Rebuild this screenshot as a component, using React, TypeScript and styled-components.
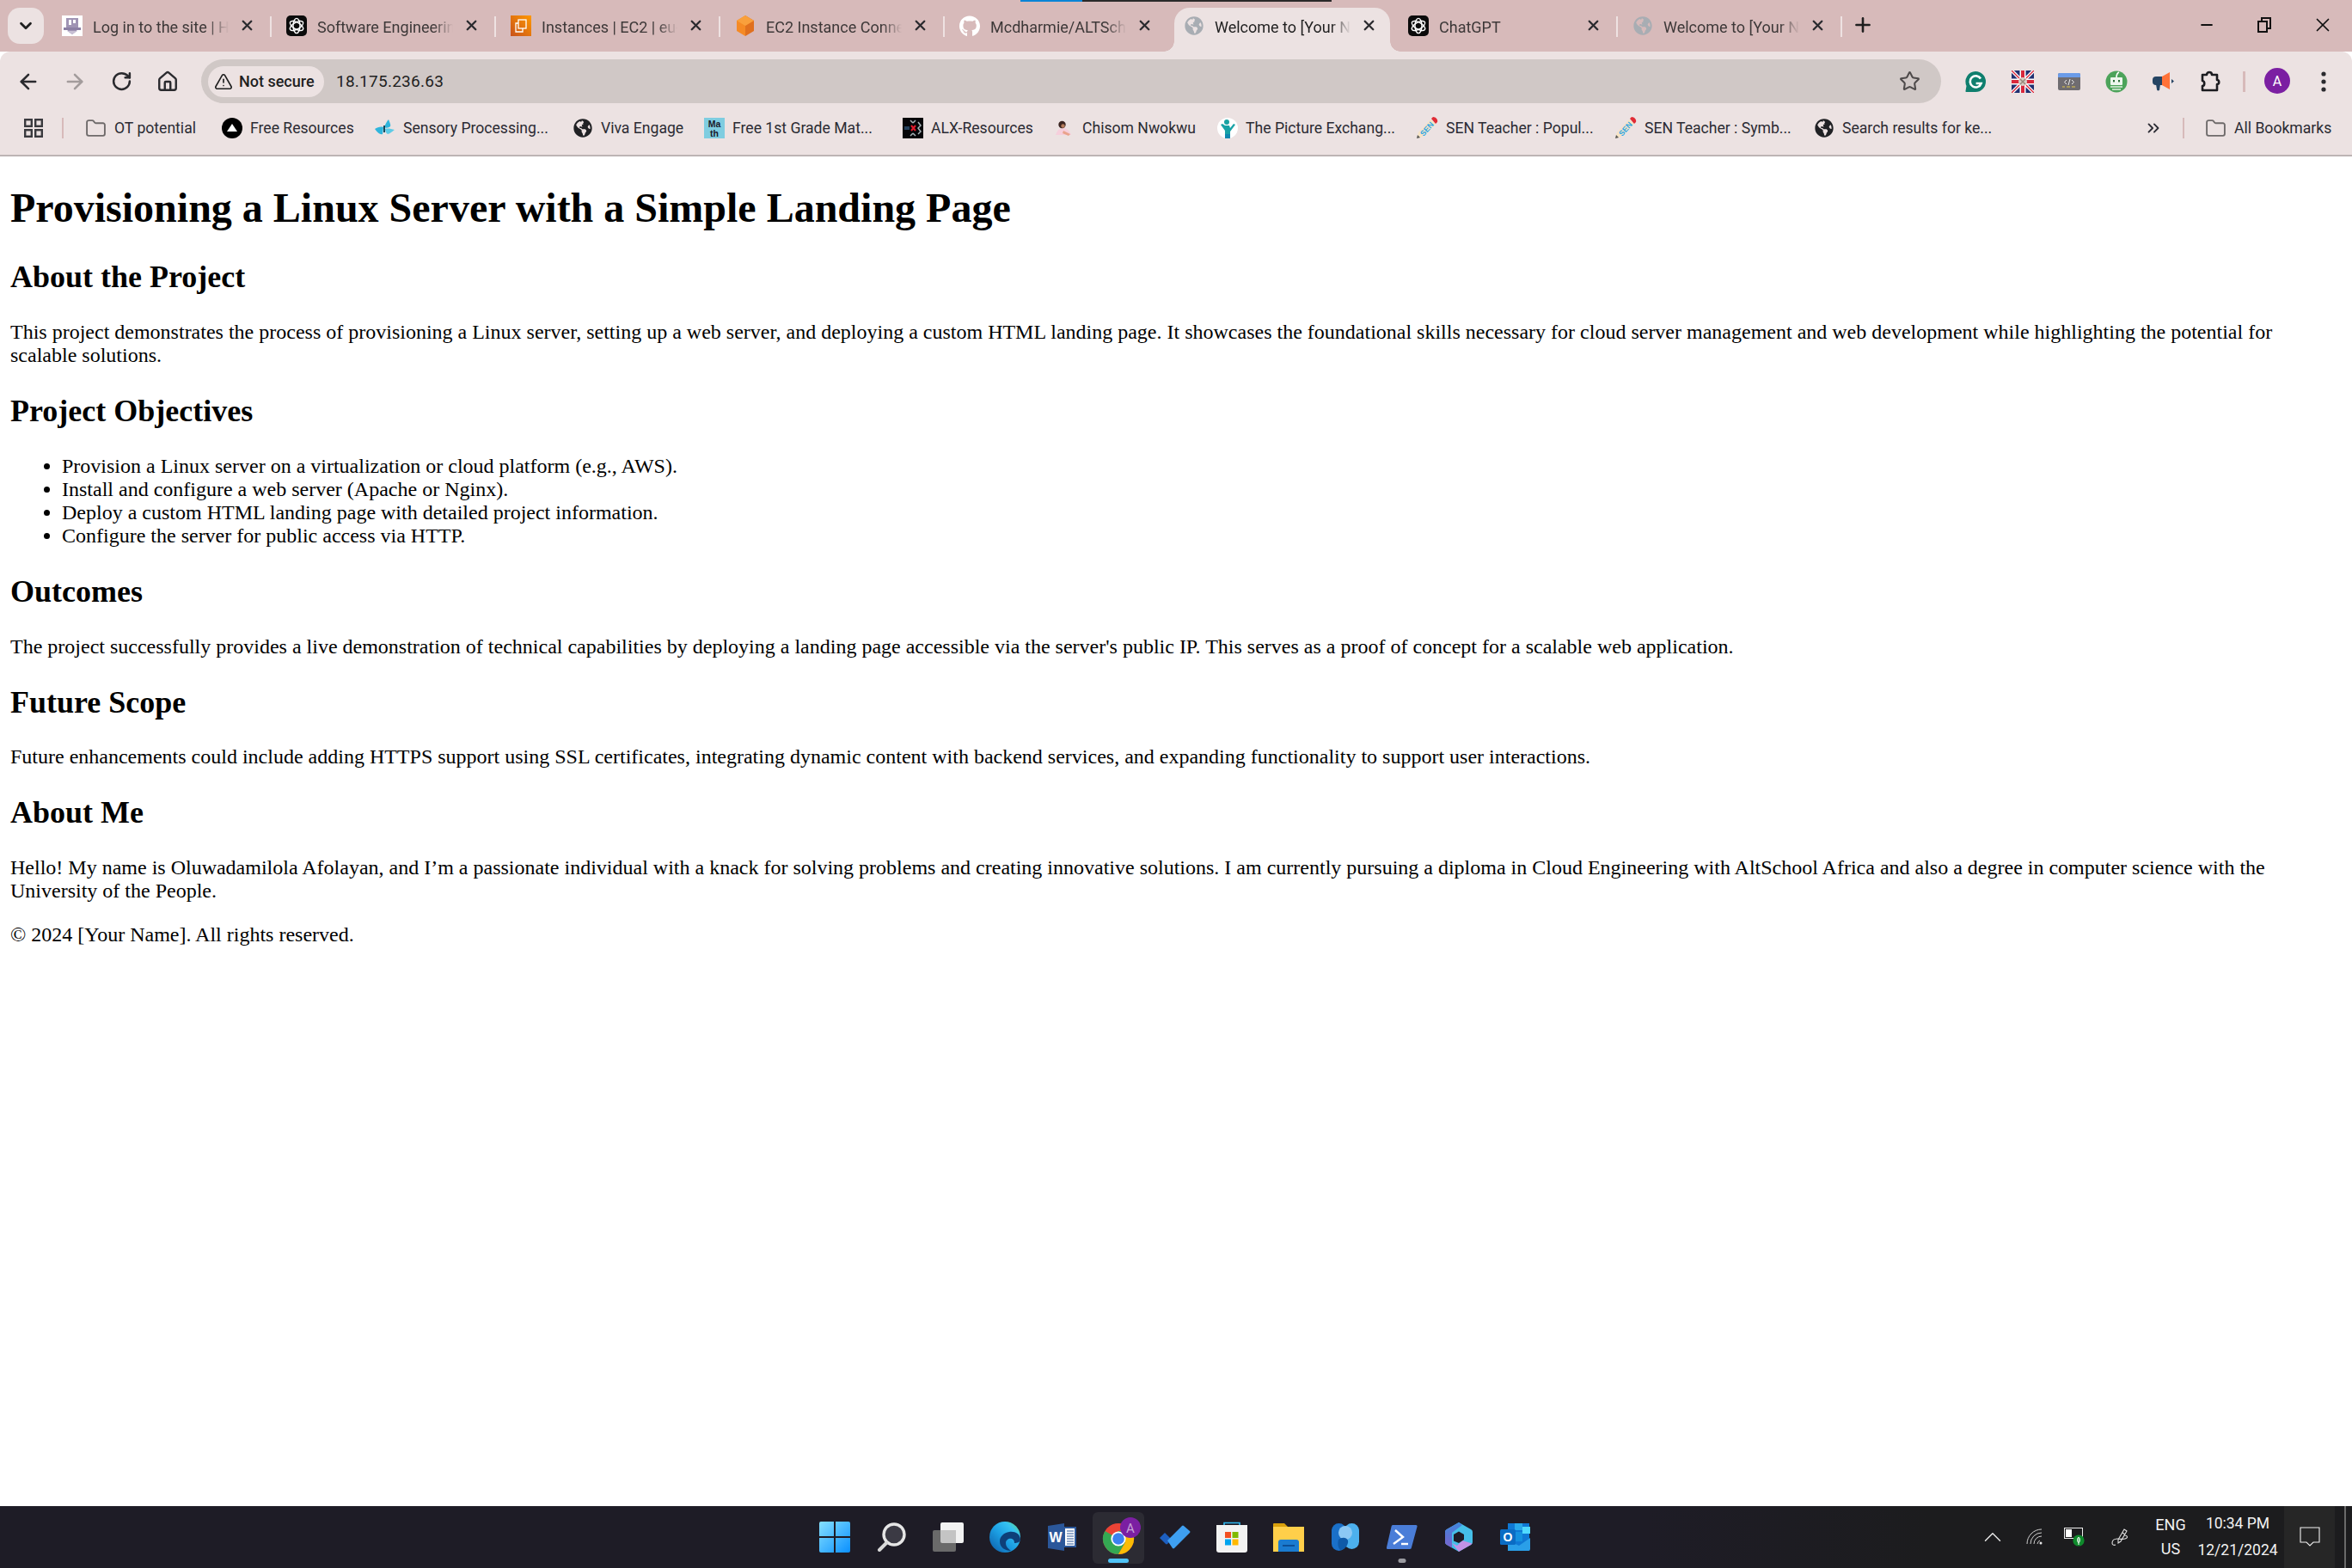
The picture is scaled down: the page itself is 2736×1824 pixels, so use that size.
import React from "react";
import styled, { createGlobalStyle } from "styled-components";
import {
  ArrowLeft,
  ArrowRight,
  RotateCw,
  House,
  Star,
  TriangleAlert,
  Folder,
  ChevronDown,
  ChevronsRight,
  ChevronUp,
  X,
  Plus,
  Minus,
} from "lucide-react";
import { FaGlobeAmericas, FaGithub } from "react-icons/fa";

const UI = `Roboto, "Noto Sans", sans-serif`;

const Global = createGlobalStyle`
  html, body { margin: 0; padding: 0; background: #fff; overflow: hidden; }
  #root { height: 1824px; }
`;

const Screen = styled.div`
  position: relative;
  display: flex;
  flex-direction: column;
  height: 1824px;
  width: 2736px;
  overflow: hidden;
`;

/* ---------- tab strip ---------- */
const TabStrip = styled.div`
  position: relative;
  display: flex;
  align-items: flex-end;
  height: 60px;
  flex: none;
  background: #d7baba;
  padding-left: 9px;
  font-family: ${UI};
`;
const LoadBar = styled.div`
  position: absolute;
  top: 0;
  left: 1187px;
  width: 362px;
  height: 2px;
  background: linear-gradient(90deg, #0a84d6 0 72px, #2a2a2a 72px);
`;
const TabSearch = styled.div`
  flex: none;
  align-self: flex-start;
  margin-top: 9px;
  margin-right: 4px;
  width: 42px;
  height: 42px;
  border-radius: 14px;
  background: #ece2e2;
  display: flex;
  align-items: center;
  justify-content: center;
  color: #1f1f1f;
`;
const Tab = styled.div<{ $active?: boolean; $sep?: boolean }>`
  position: relative;
  flex: none;
  width: 261px;
  height: 51px;
  box-sizing: border-box;
  padding-left: 17px;
  display: flex;
  align-items: center;
  color: ${(p) => (p.$active ? "#1f1f1f" : "#3d3838")};
  font-size: 18px;
  &::after {
    content: "";
    display: ${(p) => (p.$sep ? "block" : "none")};
    position: absolute;
    right: 0;
    top: 10px;
    width: 2px;
    height: 24px;
    background: #eee2e2;
  }
`;
const ActiveShape = styled.div`
  position: absolute;
  left: 6px;
  right: 4px;
  top: 0;
  bottom: 0;
  background: #ece2e2;
  border-radius: 18px 18px 0 0;
  &::before,
  &::after {
    content: "";
    position: absolute;
    bottom: 0;
    width: 12px;
    height: 12px;
  }
  &::before {
    left: -12px;
    background: radial-gradient(circle at 0 0, #d7baba 11.5px, #ece2e2 12px);
  }
  &::after {
    right: -12px;
    background: radial-gradient(circle at 100% 0, #d7baba 11.5px, #ece2e2 12px);
  }
`;
const TabIcon = styled.span<{ $dim?: boolean }>`
  position: relative;
  flex: none;
  width: 24px;
  height: 24px;
  margin-top: -9px;
  display: flex;
  align-items: center;
  justify-content: center;
  color: ${(p) => (p.$dim ? "#a8adb3" : "#202124")};
  svg { display: block; }
`;
const TabTitle = styled.span`
  position: relative;
  flex: none;
  width: 158px;
  margin-left: 12px;
  margin-top: -6px;
  overflow: hidden;
  white-space: nowrap;
  line-height: 24px;
  -webkit-mask-image: linear-gradient(90deg, #000 135px, transparent 158px);
  mask-image: linear-gradient(90deg, #000 135px, transparent 158px);
`;
const TabClose = styled.span`
  position: relative;
  flex: none;
  width: 20px;
  height: 20px;
  margin-left: 11px;
  margin-top: -10px;
  display: flex;
  align-items: center;
  justify-content: center;
  color: #2b2b2f;
`;
const NewTab = styled.div`
  align-self: flex-start;
  margin-top: 15px;
  margin-left: 10px;
  width: 28px;
  height: 28px;
  display: flex;
  align-items: center;
  justify-content: center;
  color: #1f1f1f;
`;
const WindowControls = styled.div`
  margin-left: auto;
  align-self: flex-start;
  display: flex;
  margin-right: 0;
  color: #111;
  height: 58px;
`;
const WinButton = styled.div<{ $w: number }>`
  width: ${(p) => p.$w}px;
  height: 58px;
  display: flex;
  align-items: center;
  justify-content: center;
`;

/* ---------- toolbar ---------- */
const Toolbar = styled.div`
  flex: none;
  height: 60px;
  background: #ece2e2;
  border-radius: 12px 12px 0 0;
  box-sizing: border-box;
  padding: 9px 0 0 6px;
  display: flex;
  align-items: flex-start;
  font-family: ${UI};
`;
const NavButton = styled.div<{ $off?: boolean }>`
  flex: none;
  width: 54px;
  height: 51px;
  display: flex;
  align-items: center;
  justify-content: center;
  color: ${(p) => (p.$off ? "#a39c9c" : "#2a2a2e")};
`;
const Omnibox = styled.div`
  flex: none;
  width: 2024px;
  height: 51px;
  box-sizing: border-box;
  margin-left: 12px;
  margin-right: 13px;
  border-radius: 26px;
  background: #d0c8c6;
  padding: 0 24px 0 8px;
  display: flex;
  align-items: center;
`;
const Chip = styled.div`
  flex: none;
  height: 36px;
  width: 135px;
  box-sizing: border-box;
  border-radius: 18px;
  background: #ece2e2;
  padding-left: 7px;
  display: flex;
  align-items: center;
  gap: 7px;
  color: #1f1f1f;
  font-size: 18px;
  font-weight: 500;
  white-space: nowrap;
`;
const Url = styled.span`
  margin-left: 14px;
  font-size: 19px;
  letter-spacing: 0.25px;
  color: #1f1f1f;
`;
const StarWrap = styled.span`
  margin-left: auto;
  display: flex;
  color: #4f4b4b;
`;
const ToolSlot = styled.div`
  flex: none;
  width: 54.5px;
  height: 51px;
  display: flex;
  align-items: center;
  justify-content: center;
`;
const ToolSep = styled.div`
  flex: none;
  width: 3px;
  height: 24px;
  margin: 14px 22px 0 11px;
  background: #d7baba;
`;
const Avatar = styled.div`
  flex: none;
  width: 30px;
  height: 30px;
  margin-top: 10px;
  border-radius: 50%;
  background: #7b1fa2;
  color: #fff;
  display: flex;
  align-items: center;
  justify-content: center;
  font-size: 16px;
`;
const Dots = styled.div`
  flex: none;
  width: 54px;
  height: 51px;
  margin-left: 12px;
  display: flex;
  align-items: center;
  justify-content: center;
  color: #2a2a2e;
`;

/* ---------- bookmarks ---------- */
const BookmarkBar = styled.div`
  flex: none;
  height: 62px;
  box-sizing: border-box;
  background: #ece2e2;
  border-bottom: 2px solid #bdb4b4;
  display: flex;
  align-items: center;
  padding: 0 0 2px 28px;
  font-family: ${UI};
  font-size: 17.6px;
  color: #2b2b33;
`;
const BarSep = styled.div<{ $ml: number; $mr: number }>`
  flex: none;
  width: 2px;
  height: 24px;
  margin-left: ${(p) => p.$ml}px;
  margin-right: ${(p) => p.$mr}px;
  background: #d7baba;
`;
const Bookmark = styled.div<{ $w: number }>`
  flex: none;
  width: ${(p) => p.$w}px;
  display: flex;
  align-items: center;
  gap: 9px;
  white-space: nowrap;
  overflow: hidden;
  color: #2b2b33;
`;
const BookmarkGlobe = styled.span`
  flex: none;
  width: 24px;
  height: 24px;
  display: flex;
  align-items: center;
  justify-content: center;
  color: #202124;
`;
const Overflow = styled.div`
  margin-left: auto;
  display: flex;
  color: #2b2b33;
`;

/* ---------- page ---------- */
const Page = styled.main`
  flex: 1;
  min-height: 0;
  overflow: hidden;
  background: #fff;
  color: #000;
  padding: 0 12px;
  font-family: "Liberation Serif", "Times New Roman", serif;
  font-size: 24px;
  line-height: 27px;
`;
const H1 = styled.h1`
  font-size: 48px;
  line-height: 55px;
  margin: 32.16px 0;
  font-weight: 700;
`;
const H2 = styled.h2`
  font-size: 36px;
  line-height: 42px;
  margin: 29.88px 0;
  font-weight: 700;
`;
const Para = styled.p`
  margin: 24px 0;
`;
const List = styled.ul`
  margin: 24px 0;
  padding-left: 60px;
`;

/* ---------- taskbar ---------- */
const Taskbar = styled.footer`
  flex: none;
  height: 72px;
  display: flex;
  align-items: stretch;
  background: linear-gradient(90deg, #1e1c26 0 70%, #1c1c1e 82%);
  font-family: ${UI};
  color: #f2f2f2;
`;
const TaskSpacer = styled.div`
  flex: 0 0 938px;
`;
const TaskGroup = styled.div`
  display: flex;
  align-items: stretch;
`;
const TaskSlot = styled.div<{ $active?: boolean }>`
  position: relative;
  width: 66px;
  display: flex;
  align-items: center;
  justify-content: center;
  &::before {
    content: "";
    display: ${(p) => (p.$active ? "block" : "none")};
    position: absolute;
    left: 3px;
    right: 3px;
    top: 7px;
    bottom: 5px;
    border-radius: 6px;
    background: #2c2b33;
  }
  svg { position: relative; }
`;
const Pip = styled.span<{ $wide?: boolean }>`
  position: absolute;
  bottom: 6px;
  left: 50%;
  transform: translateX(-50%);
  width: ${(p) => (p.$wide ? 24 : 9)}px;
  height: 5px;
  border-radius: 3px;
  background: ${(p) => (p.$wide ? "#4fc3f7" : "#9a9aa0")};
`;
const Tray = styled.div`
  margin-left: auto;
  display: flex;
  align-items: center;
  height: 100%;
`;
const TrayIcon = styled.div<{ $w: number }>`
  flex: none;
  width: ${(p) => p.$w}px;
  display: flex;
  align-items: center;
  justify-content: center;
`;
const Lang = styled.div`
  flex: none;
  width: 56px;
  text-align: center;
  font-size: 18px;
  line-height: 28px;
`;
const Clock = styled.div`
  flex: none;
  width: 100px;
  margin-right: 4px;
  text-align: center;
  font-size: 17.5px;
  line-height: 31px;
`;
const Notify = styled.div`
  flex: none;
  width: 59px;
  height: 100%;
  background: #262626;
  display: flex;
  align-items: center;
  justify-content: center;
`;
const EdgeLine = styled.div`
  flex: none;
  width: 20px;
  height: 100%;
  display: flex;
  justify-content: center;
  &::after {
    content: "";
    width: 2px;
    margin-left: 4px;
    background: #6a6a6a;
  }
`;

/* ---------- drawings ---------- */
const OpenAIIcon = () => (
  <svg width="24" height="24" viewBox="0 0 24 24">
    <rect width="24" height="24" rx="5" fill="#0b0b0b" />
    <g fill="none" stroke="#fff" strokeWidth="1.4">
      <ellipse cx="12" cy="12" rx="4" ry="8.6" />
      <ellipse cx="12" cy="12" rx="4" ry="8.6" transform="rotate(60 12 12)" />
      <ellipse cx="12" cy="12" rx="4" ry="8.6" transform="rotate(120 12 12)" />
    </g>
  </svg>
);
const CrestIcon = () => (
  <svg width="24" height="24" viewBox="0 0 24 24">
    <rect width="24" height="24" fill="#fff" />
    <path d="M5 3h14v10c0 4-3 6-7 9-4-3-7-5-7-9z" fill="#a094b4" />
    <path d="M8 5h3v6H8zM13 5h3v4h-3z" fill="#fff" />
    <path d="M2 14h20v3H2z" fill="#8c80a4" />
    <path d="M6 18h12l-6 4z" fill="#c8c0d4" />
  </svg>
);
const Ec2Icon = () => (
  <svg width="24" height="24" viewBox="0 0 24 24">
    <defs>
      <linearGradient id="ec2g" x1="0" y1="1" x2="1" y2="0">
        <stop offset="0" stopColor="#c8511b" />
        <stop offset="1" stopColor="#ff9900" />
      </linearGradient>
    </defs>
    <rect width="24" height="24" fill="url(#ec2g)" />
    <g fill="none" stroke="#fff" strokeWidth="1.3">
      <rect x="9" y="5" width="9" height="10" />
      <path d="M9 9H6v10h8v-4" />
    </g>
  </svg>
);
const CubeIcon = () => (
  <svg width="24" height="24" viewBox="0 0 24 24">
    <path d="M12 0 22 6v12l-10 6z" fill="#e0701e" />
    <path d="M12 0 2 6v12l10 6z" fill="#f58a25" />
    <path d="M12 0 22 6 12 12 2 6z" fill="#f9a03c" />
  </svg>
);
const GithubIcon = () => <FaGithub size={25} color="#ffffff" />;
const Globe = () => <FaGlobeAmericas size={22} />;

const TriIcon = () => (
  <svg width="24" height="24" viewBox="0 0 24 24">
    <circle cx="12" cy="12" r="12" fill="#000" />
    <path d="M12 7 18 16H6z" fill="#fff" />
  </svg>
);
const ButterflyIcon = () => (
  <svg width="25" height="24" viewBox="0 0 25 24">
    <path d="M1 13c3-2 7-3 10-2l-1 8c-3 1-6-2-9-6z" fill="#2fb5dc" />
    <path d="M12 11c1-3 3-7 5-9 1 3 3 6 2 8-2 2-5 2-7 1z" fill="#2fb5dc" />
    <path d="M13 13c3-1 7 0 11 1-3 2-6 5-8 5-2-1-3-4-3-6z" fill="#5dcbe6" />
    <path d="M11 9h2v8h-2z" fill="#18485a" />
  </svg>
);
const MathIcon = () => (
  <svg width="24" height="24" viewBox="0 0 24 24">
    <rect width="24" height="24" fill="#7fcde0" />
    <text x="12" y="10.5" textAnchor="middle" fontSize="10.5" fontWeight="700" fontFamily="Liberation Sans, sans-serif" fill="#1a1a2a">Ma</text>
    <text x="12" y="21.5" textAnchor="middle" fontSize="10.5" fontWeight="700" fontFamily="Liberation Sans, sans-serif" fill="#1a1a2a">th</text>
  </svg>
);
const AlxIcon = () => (
  <svg width="24" height="24" viewBox="0 0 24 24">
    <rect width="24" height="24" fill="#060609" />
    <path d="M2 10h6v4H2z" fill="#24405c" />
    <path d="M10 9l5 6M15 9l-5 6" stroke="#e01b2c" strokeWidth="2" />
    <path d="M9 3l3 3M15 3l-3 3M18 5l3 4-3 3 3 4-3 3M9 21l3-3M15 21l-3-3" stroke="#a8b4b8" strokeWidth="1.5" fill="none" />
  </svg>
);
const ChisomIcon = () => (
  <svg width="24" height="24" viewBox="0 0 24 24">
    <path d="M2 20c2-6 5-8 9-8s7 3 9 8z" fill="#f6cfdc" />
    <circle cx="9.5" cy="8" r="4.2" fill="#3a2420" />
    <circle cx="10.5" cy="9.5" r="2.2" fill="#b57a5a" />
    <path d="M11 15l8 4-2 2-7-3z" fill="#e9a38c" />
  </svg>
);
const PecsIcon = () => (
  <svg width="24" height="24" viewBox="0 0 24 24">
    <circle cx="12" cy="12" r="12" fill="#fff" />
    <circle cx="11" cy="5" r="3" fill="#19a3a3" />
    <path d="M9 9h5l1 3 4-5 2 1-6 8v7H9v-8L4 8l2-1z" fill="#17a2a6" />
    <rect x="9" y="19" width="6" height="5" fill="#0f88b0" />
  </svg>
);
const PencilIcon = () => (
  <svg width="26" height="26" viewBox="0 0 26 26">
    <path d="M1 25 3 18 17 3l6 5L8 23z" fill="#f6e4c4" />
    <path d="M1 25 2 21l3 3z" fill="#555" />
    <path d="M18 2l2-2c3 0 6 3 5 6l-2 2z" fill="#e02b35" />
    <text x="13" y="17" textAnchor="middle" fontSize="9" fontWeight="700" fontFamily="Liberation Sans, sans-serif" fill="#2fa6e6" transform="rotate(-48 13 14)">SEN</text>
  </svg>
);

const GrammarlyIcon = () => (
  <svg width="26" height="26" viewBox="0 0 26 26">
    <path d="M13 1a12 12 0 1 1 0 24H2.5c-.8 0-1.2-.6-1-1.3L2.5 18A12 12 0 0 1 13 1z" fill="#0f7f6e" />
    <path d="M19 9.5a6.6 6.6 0 1 0 .6 5.5h-6" fill="none" stroke="#fff" strokeWidth="2.6" />
  </svg>
);
const FlagIcon = () => (
  <svg width="26" height="26" viewBox="0 0 26 26">
    <rect width="26" height="26" fill="#1f2f70" />
    <path d="M0 0 26 26M26 0 0 26" stroke="#fff" strokeWidth="4" />
    <path d="M0 0 26 26M26 0 0 26" stroke="#d8283c" strokeWidth="1.4" />
    <path d="M13 0v26M0 13h26" stroke="#fff" strokeWidth="7" />
    <path d="M13 0v26M0 13h26" stroke="#d8283c" strokeWidth="4" />
    <circle cx="13" cy="13" r="5" fill="#d9cfc6" />
    <path d="M10 10l6 6M16 10l-6 6" stroke="#9b8a7c" strokeWidth="1.6" />
  </svg>
);
const DevIcon = () => (
  <svg width="26" height="20" viewBox="0 0 26 20">
    <rect width="26" height="20" rx="2" fill="#6f6c70" />
    <path d="M0 2a2 2 0 0 1 2-2h22a2 2 0 0 1 2 2v3H0z" fill="#6a9be8" />
    <path d="M10 8l-2.5 2.5L10 13M16 8l2.5 2.5L16 13M14 7l-2 7" stroke="#eee" strokeWidth="1" fill="none" />
    <path d="M5 16h3M10 16h4M16 16h4" stroke="#e4c84a" strokeWidth="1.2" />
  </svg>
);
const RobotIcon = () => (
  <svg width="26" height="26" viewBox="0 0 26 26">
    <circle cx="13" cy="13" r="12.5" fill="#4ca35a" />
    <path d="M13 8c0-3 1-5 3-6" stroke="#fff" strokeWidth="1.6" fill="none" />
    <rect x="6" y="8" width="14" height="9" rx="1" fill="#eef6ee" />
    <rect x="9" y="11" width="2" height="2.4" fill="#2e6e3a" />
    <rect x="15" y="11" width="2" height="2.4" fill="#2e6e3a" />
    <path d="M6 19h14M8 22h10" stroke="#dff0df" strokeWidth="1.5" />
  </svg>
);
const MegaphoneIcon = () => (
  <svg width="26" height="26" viewBox="0 0 26 26">
    <path d="M1 11a4 4 0 0 1 4-4h8v10H5a4 4 0 0 1-4-4z" fill="#254463" />
    <path d="M5 16h5l-1 7c-2 1-3 0-3-1z" fill="#254463" />
    <path d="M12 7l9-5v20l-9-5z" fill="#ff7238" />
    <path d="M23 10l3 2.5-3 2.5z" fill="#254463" />
  </svg>
);
const PuzzleIcon = () => (
  <svg width="28" height="28" viewBox="0 0 28 28" fill="none" stroke="#1c1c20" strokeWidth="2.6" strokeLinejoin="round">
    <path d="M5 6h5c0-4 6-4 6 0h6v6c3 0 3 5 0 5v7H5v-5c3 0 3-6 0-6z" />
  </svg>
);
const RestoreIcon = () => (
  <svg width="16" height="18" viewBox="0 0 16 18" fill="none" stroke="#111" strokeWidth="2">
    <rect x="1" y="5" width="10" height="12" />
    <path d="M5 4V1h10v12h-3" />
  </svg>
);

const StartIcon = () => (
  <svg width="36" height="36" viewBox="0 0 36 36">
    <defs>
      <linearGradient id="stg" x1="0" y1="0" x2="1" y2="1">
        <stop offset="0" stopColor="#86e0ff" />
        <stop offset="1" stopColor="#0a90ff" />
      </linearGradient>
    </defs>
    <path d="M2 0h15v17H0V2a2 2 0 0 1 2-2zM19 0h15a2 2 0 0 1 2 2v15H19zM0 19h17v17H2a2 2 0 0 1-2-2zM19 19h17v15a2 2 0 0 1-2 2H19z" fill="url(#stg)" />
  </svg>
);
const SearchIcon = () => (
  <svg width="34" height="34" viewBox="0 0 34 34">
    <circle cx="20" cy="14" r="12" fill="#3b3a44" stroke="#e6e6e6" strokeWidth="3.4" />
    <path d="M11 24 3 32" stroke="#d8d8d8" strokeWidth="4" strokeLinecap="round" />
  </svg>
);
const TaskViewIcon = () => (
  <svg width="36" height="34" viewBox="0 0 36 34">
    <rect x="9" y="0" width="27" height="24" rx="2" fill="#f2f2f2" />
    <rect x="0" y="9" width="27" height="25" rx="2" fill="#6a6a6a" />
    <path d="M9 9h18v15H11a2 2 0 0 1-2-2z" fill="#c4c4c4" />
  </svg>
);
const EdgeIcon = () => (
  <svg width="36" height="36" viewBox="0 0 36 36">
    <defs>
      <linearGradient id="edg" x1="0" y1="1" x2="1" y2="0">
        <stop offset="0" stopColor="#0c59a4" />
        <stop offset=".45" stopColor="#1b9de2" />
        <stop offset=".75" stopColor="#35c1f1" />
        <stop offset="1" stopColor="#6ade6c" />
      </linearGradient>
    </defs>
    <circle cx="18" cy="18" r="18" fill="url(#edg)" />
    <path d="M36 21c0-7-7-10-13-9-6 1-11 5-11 11 0 7 6 11 13 11-2-2-6-4-6-9 0-4 4-6 7-5 3 1 3 4 3 5 3 0 7-1 7-4z" fill="#0e3f78" />
  </svg>
);
const WordIcon = () => (
  <svg width="33" height="32" viewBox="0 0 33 32">
    <path d="M19 0 0 3v26l19 3z" fill="#2b579a" />
    <rect x="18" y="4" width="15" height="24" fill="#2b579a" />
    <rect x="20" y="6" width="11" height="20" fill="#fff" />
    <path d="M22 9h8M22 12h8M22 15h8M22 18h8M22 21h8M22 24h8" stroke="#2b579a" strokeWidth="1.2" />
    <text x="9" y="22" textAnchor="middle" fontSize="16" fontWeight="700" fontFamily="Liberation Sans, sans-serif" fill="#fff">W</text>
  </svg>
);
const ChromeIcon = () => (
  <svg width="56" height="46" viewBox="-10 0 56 46">
    <circle cx="18" cy="25" r="18" fill="#ea4335" />
    <path d="M18 25 2.4 34A18 18 0 0 1 2.4 16z" fill="#34a853" />
    <path d="M2.4 34A18 18 0 0 0 18 43L33.6 16H18z" fill="#34a853" />
    <path d="M33.6 16A18 18 0 0 1 18 43l7.8-13.5-2-6z" fill="#fbbc04" />
    <circle cx="18" cy="25" r="8.6" fill="#fff" />
    <circle cx="18" cy="25" r="6.8" fill="#3b82f0" />
    <circle cx="32" cy="12" r="12" fill="#7b1fa2" />
    <text x="32" y="17.5" textAnchor="middle" fontSize="15" fontFamily="Roboto, sans-serif" fill="#c7a3d8">A</text>
  </svg>
);
const TodoIcon = () => (
  <svg width="36" height="28" viewBox="0 0 36 28">
    <path d="M0 15l6-6 8 8-5 5a1.5 1.5 0 0 1-2 0z" fill="#1d5fc0" />
    <path d="M9 18 26 1a1.5 1.5 0 0 1 2 0l7 6a1.5 1.5 0 0 1 0 2L17 27a1.5 1.5 0 0 1-2 0z" fill="#3e9ff0" />
  </svg>
);
const StoreIcon = () => (
  <svg width="36" height="36" viewBox="0 0 36 36">
    <path d="M9 5V1.5h18V5" fill="none" stroke="#2fb8f0" strokeWidth="1.6" />
    <path d="M0 4h36v29a3 3 0 0 1-3 3H3a3 3 0 0 1-3-3z" fill="#f3f3f3" />
    <rect x="10" y="12" width="7" height="7" fill="#f25022" />
    <rect x="18.5" y="12" width="7" height="7" fill="#7fba00" />
    <rect x="10" y="20.5" width="7" height="7" fill="#00a4ef" />
    <rect x="18.5" y="20.5" width="7" height="7" fill="#ffb900" />
  </svg>
);
const FolderIcon = () => (
  <svg width="36" height="33" viewBox="0 0 36 33">
    <path d="M0 1a1 1 0 0 1 1-1h12l4 4h19v6H0z" fill="#d9a00c" />
    <path d="M0 4h36v29H0z" fill="#ffcf4a" />
    <path d="M6 33v-11a3 3 0 0 1 3-3h18a3 3 0 0 1 3 3v11z" fill="#1a7bd0" />
    <path d="M11 26h14" stroke="#0c4f96" strokeWidth="2" />
  </svg>
);
const BlobIcon = () => (
  <svg width="32" height="32" viewBox="0 0 32 32">
    <rect x="0" y="0" width="17" height="32" rx="8.5" fill="#1a70c8" />
    <rect x="15" y="0" width="17" height="30" rx="8.5" fill="#4cb0ee" />
    <circle cx="16" cy="11" r="8" fill="#8cc8f4" />
    <path d="M8 19c4-3 9-3 11 1 1 5-4 11-9 11-3-3-3-8-2-12z" fill="#0f5aa8" />
  </svg>
);
const PowerShellIcon = () => (
  <svg width="36" height="28" viewBox="0 0 36 28">
    <path d="M7 0h27a1.5 1.5 0 0 1 1.5 2L29 26a2 2 0 0 1-2 2H1.5A1.5 1.5 0 0 1 0 26L5.5 2A2 2 0 0 1 7 0z" fill="#4a7dd8" />
    <path d="M10 6l9 8-11 8" fill="none" stroke="#fff" strokeWidth="2.4" />
    <path d="M17 22h8" stroke="#fff" strokeWidth="2.4" />
  </svg>
);
const CopilotIcon = () => (
  <svg width="32" height="34" viewBox="0 0 32 34">
    <defs>
      <linearGradient id="cpl" x1="0" y1="0" x2="0" y2="1">
        <stop offset="0" stopColor="#3f86dc" />
        <stop offset="1" stopColor="#7a62cc" />
      </linearGradient>
    </defs>
    <path d="M16 0 30 8q2 1 2 3v12q0 2-2 3L16 34 2 26q-2-1-2-3V11q0-2 2-3z" fill="#45bfe8" />
    <path d="M16 0 2 8q-2 1-2 3v12q0 2 2 3l6 3.5V12l12-9z" fill="url(#cpl)" />
    <path d="M8 24 16 34l14-8q1-.6 1.5-1.5L20 21l-6 6z" fill="#c292e6" />
    <path d="M10 14l6-3.5 6 3.5v6l-6 4-6-2.5z" fill="#1e1c26" />
  </svg>
);
const OutlookIcon = () => (
  <svg width="36" height="32" viewBox="0 0 36 32">
    <path d="M9 0h25v32H9z" fill="#0f78d4" />
    <path d="M17 0h9v8h-9z" fill="#28a8ea" />
    <path d="M26 4h9v8h-9z" fill="#50d9ff" />
    <path d="M9 10h17v11H9z" fill="#1490df" />
    <path d="M9 32V20l13 6 13-9v13a2 2 0 0 1-2 2z" fill="#2a9fe8" />
    <rect x="0" y="7" width="18" height="18" rx="1.5" fill="#0a6cc4" />
    <text x="9" y="21" textAnchor="middle" fontSize="14" fontWeight="700" fontFamily="Liberation Sans, sans-serif" fill="#fff">O</text>
  </svg>
);
const WifiIcon = () => (
  <svg width="20" height="20" viewBox="0 0 20 20" fill="none" stroke="#cfcfcf" strokeWidth="1">
    <path d="M1 18A17 17 0 0 1 18 1M5 18A13 13 0 0 1 18 5M9 18A9 9 0 0 1 18 9M13 18a5 5 0 0 1 3-4" />
    <circle cx="17" cy="17" r="1.5" fill="#e8e8e8" stroke="none" />
  </svg>
);
const BatteryIcon = () => (
  <svg width="26" height="22" viewBox="0 0 26 22">
    <rect x=".5" y=".5" width="21" height="12" fill="none" stroke="#eee" />
    <rect x="2" y="2" width="7" height="9" fill="#fff" />
    <circle cx="17" cy="15" r="6.6" fill="#0f8a2c" />
    <path d="M17 11c2 1.6 2 5 0 6.6-2-1.6-2-5 0-6.6zM17 12v8" fill="none" stroke="#fff" strokeWidth="1" />
  </svg>
);
const PenIcon = () => (
  <svg width="22" height="22" viewBox="0 0 22 22" fill="none" stroke="#e0e0e0" strokeWidth="1.1">
    <path d="M8 14 15 2l3 2-7 12-3 2zM13 6l3 2" />
    <path d="M15 9c4 0 5 3 1 4-3 1-7 0-9 0-4 0-6 2-6 5 0 2 2 3 4 2" />
  </svg>
);
const ChatIcon = () => (
  <svg width="26" height="26" viewBox="0 0 26 26" fill="none" stroke="#f2f2f2" strokeWidth="1.1">
    <path d="M2 2h22v17h-7l-4 4-4-4H2z" />
  </svg>
);

type TabData = { icon: React.ReactNode; title: string; active?: boolean; sep?: boolean; dim?: boolean };
const tabs: TabData[] = [
  { icon: <CrestIcon />, title: "Log in to the site | Hi", sep: true },
  { icon: <OpenAIIcon />, title: "Software Engineering", sep: true },
  { icon: <Ec2Icon />, title: "Instances | EC2 | eu-west", sep: true },
  { icon: <CubeIcon />, title: "EC2 Instance Connect", sep: true },
  { icon: <GithubIcon />, title: "Mcdharmie/ALTSchool" },
  { icon: <Globe />, title: "Welcome to [Your Name]", active: true, dim: true },
  { icon: <OpenAIIcon />, title: "ChatGPT", sep: true },
  { icon: <Globe />, title: "Welcome to [Your Name]", sep: true, dim: true },
];

const bookmarks: { icon: React.ReactNode; label: string; w: number }[] = [
  { icon: <Folder size={25} color="#6e6a6a" strokeWidth={1.8} />, label: "OT potential", w: 159 },
  { icon: <TriIcon />, label: "Free Resources", w: 177 },
  { icon: <ButterflyIcon />, label: "Sensory Processing...", w: 231 },
  { icon: <BookmarkGlobe><FaGlobeAmericas size={22} /></BookmarkGlobe>, label: "Viva Engage", w: 153 },
  { icon: <MathIcon />, label: "Free 1st Grade Mat...", w: 231 },
  { icon: <AlxIcon />, label: "ALX-Resources", w: 176 },
  { icon: <ChisomIcon />, label: "Chisom Nwokwu", w: 190 },
  { icon: <PecsIcon />, label: "The Picture Exchang...", w: 231 },
  { icon: <PencilIcon />, label: "SEN Teacher : Popul...", w: 231 },
  { icon: <PencilIcon />, label: "SEN Teacher : Symb...", w: 232 },
  { icon: <BookmarkGlobe><FaGlobeAmericas size={22} /></BookmarkGlobe>, label: "Search results for ke...", w: 231 },
];

const taskIcons: { node: React.ReactNode; active?: boolean; running?: boolean }[] = [
  { node: <StartIcon /> },
  { node: <SearchIcon /> },
  { node: <TaskViewIcon /> },
  { node: <EdgeIcon /> },
  { node: <WordIcon /> },
  { node: <ChromeIcon />, active: true },
  { node: <TodoIcon /> },
  { node: <StoreIcon /> },
  { node: <FolderIcon /> },
  { node: <BlobIcon /> },
  { node: <PowerShellIcon />, running: true },
  { node: <CopilotIcon /> },
  { node: <OutlookIcon /> },
];

export default function App() {
  return (
    <Screen>
      <Global />
      <TabStrip>
        <LoadBar />
        <TabSearch>
          <ChevronDown size={22} strokeWidth={3} />
        </TabSearch>
        {tabs.map((t, i) => (
          <Tab key={i} $active={t.active} $sep={t.sep}>
            {t.active && <ActiveShape />}
            <TabIcon $dim={t.dim}>{t.icon}</TabIcon>
            <TabTitle>{t.title}</TabTitle>
            <TabClose>
              <X size={19} strokeWidth={3} />
            </TabClose>
          </Tab>
        ))}
        <NewTab>
          <Plus size={26} strokeWidth={2.4} />
        </NewTab>
        <WindowControls>
          <WinButton $w={66}>
            <Minus size={20} strokeWidth={2.6} />
          </WinButton>
          <WinButton $w={68}>
            <RestoreIcon />
          </WinButton>
          <WinButton $w={68}>
            <X size={26} strokeWidth={1.6} />
          </WinButton>
        </WindowControls>
      </TabStrip>

      <Toolbar>
        <NavButton>
          <ArrowLeft size={28} strokeWidth={2.2} />
        </NavButton>
        <NavButton $off>
          <ArrowRight size={28} strokeWidth={2.2} />
        </NavButton>
        <NavButton>
          <RotateCw size={25} strokeWidth={2.4} />
        </NavButton>
        <NavButton>
          <House size={26} strokeWidth={2.2} />
        </NavButton>
        <Omnibox>
          <Chip>
            <TriangleAlert size={22} strokeWidth={1.8} />
            Not secure
          </Chip>
          <Url>18.175.236.63</Url>
          <StarWrap>
            <Star size={25} strokeWidth={2} />
          </StarWrap>
        </Omnibox>
        <ToolSlot><GrammarlyIcon /></ToolSlot>
        <ToolSlot><FlagIcon /></ToolSlot>
        <ToolSlot><DevIcon /></ToolSlot>
        <ToolSlot><RobotIcon /></ToolSlot>
        <ToolSlot><MegaphoneIcon /></ToolSlot>
        <ToolSlot><PuzzleIcon /></ToolSlot>
        <ToolSep />
        <Avatar>A</Avatar>
        <Dots>
          <svg width="6" height="24" viewBox="0 0 6 24" fill="#2a2a2e">
            <circle cx="3" cy="3" r="2.6" />
            <circle cx="3" cy="12" r="2.6" />
            <circle cx="3" cy="21" r="2.6" />
          </svg>
        </Dots>
      </Toolbar>

      <BookmarkBar>
        <svg width="22" height="22" viewBox="0 0 22 22" fill="none" stroke="#3a3a3e" strokeWidth="2.4">
          <rect x="1.2" y="1.2" width="7.6" height="7.6" />
          <rect x="13.2" y="1.2" width="7.6" height="7.6" />
          <rect x="1.2" y="13.2" width="7.6" height="7.6" />
          <rect x="13.2" y="13.2" width="7.6" height="7.6" />
        </svg>
        <BarSep $ml={22} $mr={25} />
        {bookmarks.map((b) => (
          <Bookmark key={b.label} $w={b.w}>
            {b.icon}
            <span>{b.label}</span>
          </Bookmark>
        ))}
        <Overflow>
          <ChevronsRight size={22} strokeWidth={2} />
        </Overflow>
        <BarSep $ml={23} $mr={24} />
        <Bookmark $w={171}>
          <Folder size={25} color="#6e6a6a" strokeWidth={1.8} />
          <span>All Bookmarks</span>
        </Bookmark>
      </BookmarkBar>

      <Page>
        <H1>Provisioning a Linux Server with a Simple Landing Page</H1>
        <H2>About the Project</H2>
        <Para>
          This project demonstrates the process of provisioning a Linux server, setting up a web server, and deploying a custom HTML landing page. It showcases the foundational skills necessary for cloud server management and web development while highlighting the potential for scalable solutions.
        </Para>
        <H2>Project Objectives</H2>
        <List>
          <li>Provision a Linux server on a virtualization or cloud platform (e.g., AWS).</li>
          <li>Install and configure a web server (Apache or Nginx).</li>
          <li>Deploy a custom HTML landing page with detailed project information.</li>
          <li>Configure the server for public access via HTTP.</li>
        </List>
        <H2>Outcomes</H2>
        <Para>
          The project successfully provides a live demonstration of technical capabilities by deploying a landing page accessible via the server's public IP. This serves as a proof of concept for a scalable web application.
        </Para>
        <H2>Future Scope</H2>
        <Para>
          Future enhancements could include adding HTTPS support using SSL certificates, integrating dynamic content with backend services, and expanding functionality to support user interactions.
        </Para>
        <H2>About Me</H2>
        <Para>
          Hello! My name is Oluwadamilola Afolayan, and I’m a passionate individual with a knack for solving problems and creating innovative solutions. I am currently pursuing a diploma in Cloud Engineering with AltSchool Africa and also a degree in computer science with the University of the People.
        </Para>
        <Para>© 2024 [Your Name]. All rights reserved.</Para>
      </Page>

      <Taskbar>
        <TaskSpacer />
        <TaskGroup>
          {taskIcons.map((t, i) => (
            <TaskSlot key={i} $active={t.active}>
              {t.node}
              {t.active && <Pip $wide />}
              {t.running && <Pip />}
            </TaskSlot>
          ))}
        </TaskGroup>
        <Tray>
          <TrayIcon $w={48}>
            <ChevronUp size={34} strokeWidth={1} color="#e8e8e8" />
          </TrayIcon>
          <TrayIcon $w={50}><WifiIcon /></TrayIcon>
          <TrayIcon $w={44}><BatteryIcon /></TrayIcon>
          <TrayIcon $w={61}><PenIcon /></TrayIcon>
          <Lang>
            <div>ENG</div>
            <div>US</div>
          </Lang>
          <Clock>
            <div>10:34 PM</div>
            <div>12/21/2024</div>
          </Clock>
          <Notify><ChatIcon /></Notify>
          <EdgeLine />
        </Tray>
      </Taskbar>
    </Screen>
  );
}
